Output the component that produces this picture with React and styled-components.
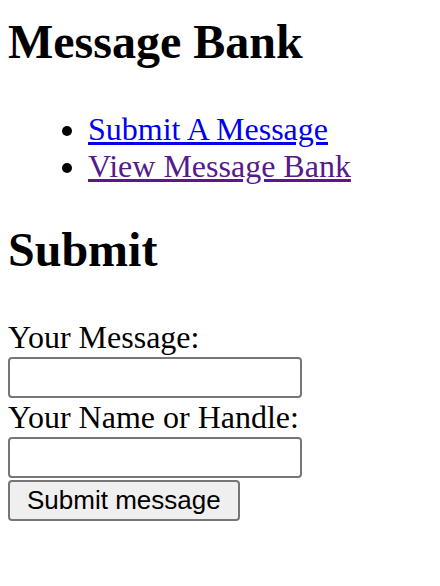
import React from "react";
import styled, { createGlobalStyle } from "styled-components";

const GlobalStyle = createGlobalStyle`
  body {
    margin: 0;
    background: #ffffff;
    color: #000000;
    font-family: "Liberation Serif", "Times New Roman", serif;
    font-size: 32px;
  }
`;

const Page = styled.div`
  padding: 14px 8px 0;
`;

const Title = styled.h1`
  margin: 0;
  font-size: 48px;
  line-height: 55px;
  font-weight: bold;
`;

const NavList = styled.ul`
  margin: 42px 0 0;
  padding-left: 80px;
  line-height: 37px;
  list-style: disc;
`;

const NavLink = styled.a`
  color: ${(p) => (p.$visited ? "#551a8b" : "#0000ee")};
  text-decoration: underline;
`;

const SectionTitle = styled.h2`
  margin: 37px 0 0;
  font-size: 48px;
  line-height: 55px;
  font-weight: bold;
`;

const Form = styled.form`
  margin-top: 41px;
  display: flex;
  flex-direction: column;
  align-items: flex-start;
`;

const Label = styled.label`
  display: block;
  line-height: 39px;
`;

const TextInput = styled.input`
  box-sizing: border-box;
  width: 294px;
  height: 41px;
  margin: 0;
  padding: 2px 4px;
  border: 2px solid #767676;
  border-radius: 4px;
  background: #ffffff;
  font-family: "Liberation Sans", Arial, sans-serif;
  font-size: 26px;
`;

const SubmitButton = styled.button`
  box-sizing: border-box;
  height: 41px;
  margin-top: 2px;
  padding: 0 17px;
  border: 2px solid #767676;
  border-radius: 4px;
  background: #efefef;
  color: #000000;
  font-family: "Liberation Sans", Arial, sans-serif;
  font-size: 26px;
`;

export default function App() {
  return (
    <>
      <GlobalStyle />
      <Page>
        <Title>Message Bank</Title>
        <NavList>
          <li>
            <NavLink href="#submit">Submit A Message</NavLink>
          </li>
          <li>
            <NavLink href="#bank" $visited>
              View Message Bank
            </NavLink>
          </li>
        </NavList>
        <SectionTitle>Submit</SectionTitle>
        <Form onSubmit={(e) => e.preventDefault()}>
          <Label htmlFor="message">Your Message:</Label>
          <TextInput id="message" type="text" />
          <Label htmlFor="handle">Your Name or Handle:</Label>
          <TextInput id="handle" type="text" />
          <SubmitButton type="submit">Submit message</SubmitButton>
        </Form>
      </Page>
    </>
  );
}
